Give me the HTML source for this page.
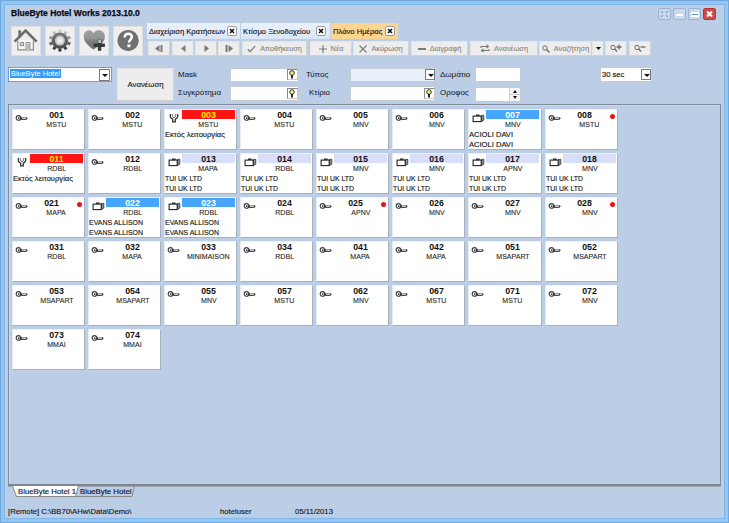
<!DOCTYPE html>
<html><head><meta charset="utf-8"><style>
*{box-sizing:border-box}
html,body{margin:0;padding:0}
body{width:729px;height:523px;overflow:hidden;position:relative;background:#8ec8f8;font-family:"Liberation Sans",sans-serif;color:#222}
.a{position:absolute}
#frame{position:absolute;left:0;top:0;width:729px;height:523px;border:1px solid #74a6d6}
#win{position:absolute;left:4px;top:4px;width:721px;height:515px;background:#bbcee6;border:1px solid #82b6ea}
#title{position:absolute;left:11px;top:8px;font-weight:bold;font-size:8.5px;line-height:10px;color:#0a0a14;white-space:nowrap;-webkit-text-stroke:0.25px #0a0a14}
.wb{position:absolute;top:8px;width:13px;height:12px;border:1px solid #9bb2d0;border-radius:2px;background:#c9d9ee}
.big{position:absolute;top:26px;width:30px;height:30px;background:#efefef;border:1px solid #e2dede}
.tab{position:absolute;top:23px;height:16px;background:linear-gradient(#eaf1fb,#dbe6f6);font-size:7.6px;line-height:9px;padding:4px 0 0 2px;white-space:nowrap;color:#161620;-webkit-text-stroke:0.15px #161620}
.tab.act{background:#fcd690}
.x{position:absolute;top:3px;width:10px;height:10px;border:1px solid #9a9a9a;background:#fff;border-radius:2px}
.x{font-size:0}
.tb{position:absolute;background:#ededed;border:1px solid #d2d2d2;border-top-color:#e4e4e4;border-left-color:#e4e4e4;font-size:7.35px;line-height:9px;color:#858585;-webkit-text-stroke:0.1px #858585;white-space:nowrap;display:flex;align-items:center;justify-content:center;gap:4px}
.tb svg{display:block}
.inp{position:absolute;background:#fff;border:1px solid #c6ccd4}
.lbl{position:absolute;font-size:8px;line-height:9px;color:#1a1a2a;white-space:nowrap;-webkit-text-stroke:0.05px #1a1a2a}
.dd{position:absolute;width:10px;height:11px;border:1px solid #7a7a7a;background:#fff}
.dd:after{content:"";position:absolute;left:1.5px;top:3.5px;border-left:3px solid transparent;border-right:3px solid transparent;border-top:3.5px solid #111}
.bulb{position:absolute;width:11px;height:11px;border:1px solid #8a8a8a;border-right-color:#c8c8c8;border-bottom-color:#c8c8c8;background:#fff}
#panel{position:absolute;left:8px;top:104px;width:713px;height:382px;border:1px solid #808c9c;border-bottom:2px solid #80868e;background:#bbcee6;box-shadow:0 1px 0 #a4acb6,inset 1px 1px 0 #ccd9ee}
.card{position:absolute;width:73px;height:41px;background:#fff;border-right:1px solid #a8b0bc;border-bottom:1px solid #a8b0bc;border-left:1px solid #e8ecf2;border-top:1px solid #eef1f5}
.ic{position:absolute}
.hd{position:absolute;left:17px;top:0px;height:9px;font-weight:bold;font-size:8.8px;line-height:10px;text-align:center;color:#111}
.hr{background:#ff1414;color:#f8f000}
.hb{background:#46a5fc;color:#fff}
.hl{background:#d9def8}
.ty{position:absolute;left:17px;top:10px;font-size:8px;line-height:9px;text-align:center;color:#1e1e1e;-webkit-text-stroke:0.1px #1e1e1e}
.ty span{display:inline-block;transform:scaleX(0.88)}
.ln{position:absolute;left:0px;font-size:8px;line-height:9px;white-space:nowrap;color:#161616;transform-origin:0 0;-webkit-text-stroke:0.15px #161616}
.dot{position:absolute;left:64px;top:4px;width:5px;height:5px;border-radius:50%;background:#f01010}
.stat{position:absolute;top:507px;font-size:7.7px;line-height:9px;color:#1a1a24;white-space:nowrap;-webkit-text-stroke:0.15px #1a1a24}
</style></head><body>
<div id="frame"></div>
<div id="win"></div>
<div id="title">BlueByte Hotel Works 2013.10.0</div>

<div class="wb" style="left:658px"><svg width="11" height="10" viewBox="0 0 11 10" style="position:absolute;left:0;top:0"><path d="M2 2L4 4M9 2L7 4M2 8L4 6M9 8L7 6" stroke="#8aa6cc" stroke-width="1.2"/></svg></div>
<div class="wb" style="left:673px"><div class="a" style="left:2px;top:5px;width:7px;height:2px;background:#fff"></div></div>
<div class="wb" style="left:688px"><div class="a" style="left:2px;top:3px;width:8px;height:5px;border:2px solid #fff;border-left-width:1.5px;border-right-width:1.5px;background:#6f8fba"></div></div>
<div class="wb" style="left:703px;background:#d24848;border-color:#b23a3a"><svg width="11" height="10" viewBox="0 0 11 10" style="position:absolute;left:0;top:0"><path d="M3 2.5L8 7.5M8 2.5L3 7.5" stroke="#fff" stroke-width="2"/></svg></div>
<div class="big" style="left:11px"><svg width="30" height="30" viewBox="0 0 30 30" style="position:absolute;left:-1px;top:-1px"><path d="M6.8 14.2V23.8H22.4V14.2" fill="#f7f7f7" stroke="#8a8a8a" stroke-width="1.2"/><rect x="7.3" y="4.3" width="2.8" height="7.5" fill="#707070"/><path d="M3.6 15.6L14.6 4.6L25.6 15.6" fill="none" stroke="#6a6a6a" stroke-width="2.6" stroke-linejoin="miter"/><path d="M6 15L14.6 6.8L23.2 15" fill="none" stroke="#bdbdbd" stroke-width="0.8"/><rect x="9.3" y="16.6" width="3.2" height="3" fill="#ddd" stroke="#8a8a8a" stroke-width="1"/><path d="M15 23.8V16.6H19V23.8" fill="#e2e2e2" stroke="#8a8a8a" stroke-width="1"/><rect x="16.6" y="18" width="1.4" height="5.6" fill="#aaa"/></svg></div>
<div class="big" style="left:45px"><svg width="30" height="30" viewBox="0 0 30 30" style="position:absolute;left:-1px;top:-1px"><defs><linearGradient id="gg" x1="0" y1="0" x2="0" y2="1"><stop offset="0" stop-color="#7a7a7a"/><stop offset="1" stop-color="#4a4a4a"/></linearGradient></defs><rect x="13.40" y="3.70" width="3" height="3" fill="#c8c8c8" transform="rotate(0 14.90 5.20)"/><rect x="18.93" y="5.50" width="3" height="3" fill="#b9b9b9" transform="rotate(36 20.43 7.00)"/><rect x="22.34" y="10.20" width="3" height="3" fill="#949494" transform="rotate(72 23.84 11.70)"/><rect x="22.34" y="16.00" width="3" height="3" fill="#656565" transform="rotate(108 23.84 17.50)"/><rect x="18.93" y="20.70" width="3" height="3" fill="#404040" transform="rotate(144 20.43 22.20)"/><rect x="13.40" y="22.50" width="3" height="3" fill="#323232" transform="rotate(180 14.90 24.00)"/><rect x="7.87" y="20.70" width="3" height="3" fill="#404040" transform="rotate(216 9.37 22.20)"/><rect x="4.46" y="16.00" width="3" height="3" fill="#656565" transform="rotate(252 5.96 17.50)"/><rect x="4.46" y="10.20" width="3" height="3" fill="#949494" transform="rotate(288 5.96 11.70)"/><rect x="7.87" y="5.50" width="3" height="3" fill="#b9b9b9" transform="rotate(324 9.37 7.00)"/><circle cx="14.9" cy="14.6" r="8.2" fill="url(#gg)"/><circle cx="14.9" cy="14.6" r="5.0" fill="#c4c4c4"/><circle cx="14.9" cy="14.6" r="3.8" fill="#e6e6e6" stroke="#bbb" stroke-width="0.6"/><circle cx="14.9" cy="14.6" r="0.8" fill="#fff"/></svg></div>
<div class="big" style="left:79px"><svg width="30" height="30" viewBox="0 0 30 30" style="position:absolute;left:-1px;top:-1px"><defs><linearGradient id="hg" x1="0" y1="0" x2="0" y2="1"><stop offset="0" stop-color="#a0a0a0"/><stop offset="0.45" stop-color="#929292"/><stop offset="0.5" stop-color="#828282"/><stop offset="1" stop-color="#6e6e6e"/></linearGradient></defs><path d="M14.3 23.6C8.5 19 4.8 15.6 4.8 10.2C4.8 6.6 7.2 4.3 10.2 4.3C12.3 4.3 13.6 5.5 14.6 7.2C15.6 5.5 17.2 4.3 19.6 4.3C23.2 4.3 25.9 6.8 25.9 10.6C25.9 15.8 21.5 19.5 14.3 23.6Z" fill="url(#hg)"/><path d="M20.6 13.7V24.7M14.6 19.2H25.9" stroke="#3a3a3a" stroke-width="3.4"/><path d="M20.6 13.9V17" stroke="#cfcfcf" stroke-width="2.4"/></svg></div>
<div class="big" style="left:113px"><svg width="30" height="30" viewBox="0 0 30 30" style="position:absolute;left:-1px;top:-1px"><circle cx="15.15" cy="14.6" r="10.6" fill="#707070"/><path d="M11.6 11.6C11.6 9 13.3 7.7 15.2 7.7C17.3 7.7 18.8 9 18.8 11C18.8 13.4 15.9 13.7 15.9 16.6" fill="none" stroke="#fff" stroke-width="2.5"/><rect x="14.4" y="18.4" width="3" height="2.8" fill="#fff"/></svg></div>
<div class="tab" style="left:147px;width:93px">Διαχείριση Κρατήσεων<div class="x" style="left:80px"><svg width="8" height="8" viewBox="0 0 8 8" style="position:absolute;left:0;top:0"><path d="M2 2L6 6M6 2L2 6" stroke="#111" stroke-width="1.6"/></svg></div></div>
<div class="tab" style="left:241px;width:89px">Κτίσμο Ξενοδοχείου<div class="x" style="left:75px"><svg width="8" height="8" viewBox="0 0 8 8" style="position:absolute;left:0;top:0"><path d="M2 2L6 6M6 2L2 6" stroke="#111" stroke-width="1.6"/></svg></div></div>
<div class="tab act" style="left:331px;width:67px">Πλάνο Ημέρας<div class="x" style="left:54px"><svg width="8" height="8" viewBox="0 0 8 8" style="position:absolute;left:0;top:0"><path d="M2 2L6 6M6 2L2 6" stroke="#111" stroke-width="1.6"/></svg></div></div>
<div class="tb" style="left:148px;top:41px;width:22px;height:15px"><svg width="8" height="7" viewBox="0 0 8 7"><path d="M0 3.5L4.5 0V7Z" fill="#7a7a7a"/><rect x="5.5" y="0" width="2" height="7" fill="#7a7a7a"/></svg></div>
<div class="tb" style="left:172px;top:41px;width:22px;height:15px"><svg width="5" height="7" viewBox="0 0 5 7"><path d="M0 3.5L4.5 0V7Z" fill="#7a7a7a"/></svg></div>
<div class="tb" style="left:195px;top:41px;width:22px;height:15px"><svg width="5" height="7" viewBox="0 0 5 7"><path d="M5 3.5L0.5 0V7Z" fill="#7a7a7a"/></svg></div>
<div class="tb" style="left:218px;top:41px;width:22px;height:15px"><svg width="8" height="7" viewBox="0 0 8 7"><rect x="0.5" y="0" width="2" height="7" fill="#7a7a7a"/><path d="M8 3.5L3.5 0V7Z" fill="#7a7a7a"/></svg></div>
<div class="tb" style="left:242px;top:41px;width:65px;height:15px"><svg width="9" height="8" viewBox="0 0 9 8"><path d="M0.8 4.2L3.2 6.6L8.2 0.8" fill="none" stroke="#7a7a7a" stroke-width="1.3"/></svg><span>Αποθήκευση</span></div>
<div class="tb" style="left:310px;top:41px;width:42px;height:15px"><svg width="8" height="8" viewBox="0 0 8 8"><path d="M4 0V8M0 4H8" stroke="#7a7a7a" stroke-width="1.2"/></svg><span>Νέα</span></div>
<div class="tb" style="left:353px;top:41px;width:56px;height:15px"><svg width="8" height="8" viewBox="0 0 8 8"><path d="M0.5 0.5L7.5 7.5M7.5 0.5L0.5 7.5" stroke="#7a7a7a" stroke-width="1.1"/></svg><span>Ακύρωση</span></div>
<div class="tb" style="left:411px;top:41px;width:57px;height:15px"><svg width="8" height="8" viewBox="0 0 8 8"><path d="M0 4H8" stroke="#555" stroke-width="1.5"/></svg><span>Διαγραφή</span></div>
<div class="tb" style="left:470px;top:41px;width:68px;height:15px"><svg width="10" height="9" viewBox="0 0 10 9"><path d="M1 4V2.5H8M6.5 1L8.5 2.5L6.5 4M9 5V6.5H2M3.5 5L1.5 6.5L3.5 8" fill="none" stroke="#7a7a7a" stroke-width="1.1"/></svg><span>Ανανέωση</span></div>
<div class="tb" style="left:539px;top:41px;width:53px;height:15px"><svg width="8" height="8" viewBox="0 0 8 8"><circle cx="3" cy="3" r="2.2" fill="none" stroke="#6a6a6a" stroke-width="1"/><path d="M4.6 4.6L7.5 7.5" stroke="#6a6a6a" stroke-width="1.4"/></svg><span>Αναζήτηση</span></div>
<div class="tb" style="left:592px;top:41px;width:12px;height:15px"><svg width="5" height="3" viewBox="0 0 5 3"><path d="M0 0H5L2.5 3Z" fill="#111"/></svg></div>
<div class="tb" style="left:605px;top:41px;width:22px;height:15px"><svg width="12" height="9" viewBox="0 0 12 9"><circle cx="3" cy="3.5" r="2.2" fill="none" stroke="#6a6a6a" stroke-width="1"/><path d="M4.6 5.1L7 7.5" stroke="#6a6a6a" stroke-width="1.4"/><path d="M9 0.5V5.5M6.5 3H11.5" stroke="#6a6a6a" stroke-width="1.3"/></svg></div>
<div class="tb" style="left:629px;top:41px;width:22px;height:15px"><svg width="12" height="9" viewBox="0 0 12 9"><circle cx="3" cy="3.5" r="2.2" fill="none" stroke="#6a6a6a" stroke-width="1"/><path d="M4.6 5.1L7 7.5" stroke="#6a6a6a" stroke-width="1.4"/><path d="M6.5 3H11.5" stroke="#6a6a6a" stroke-width="1.3"/></svg></div>
<div class="inp" style="left:8px;top:67px;width:104px;height:15px;border-color:#6f9fd6"><span class="a" style="left:1px;top:1px;height:9px;background:#3399ff;color:#fff;font-size:7.4px;line-height:9px;padding:0 1px">BlueByte Hotel</span><div class="dd" style="left:90px;top:1px;width:11px;height:12px"></div></div>
<div class="tb" style="left:117px;top:68px;width:57px;height:33px;color:#1a1a1a;-webkit-text-stroke:0.15px #1a1a1a;font-size:7.8px">Ανανέωση</div>
<div class="lbl" style="left:178px;top:70px">Mask</div>
<div class="lbl" style="left:178px;top:88px">Συγκρότημα</div>
<div class="inp" style="left:230px;top:68px;width:69px;height:14px"><div class="bulb" style="left:56px;top:0px"><svg width="8" height="9" viewBox="0 0 8 9" style="position:absolute;left:0;top:0"><circle cx="4" cy="3" r="2.3" fill="#e2f06a" stroke="#222" stroke-width="0.9"/><circle cx="4" cy="3" r="0.8" fill="#f8fcd0"/><rect x="3.1" y="5" width="1.8" height="3.6" rx="0.6" fill="#111"/></svg></div></div>
<div class="inp" style="left:230px;top:86px;width:69px;height:15px"><div class="bulb" style="left:56px;top:1px"><svg width="8" height="9" viewBox="0 0 8 9" style="position:absolute;left:0;top:0"><circle cx="4" cy="3" r="2.3" fill="#e2f06a" stroke="#222" stroke-width="0.9"/><circle cx="4" cy="3" r="0.8" fill="#f8fcd0"/><rect x="3.1" y="5" width="1.8" height="3.6" rx="0.6" fill="#111"/></svg></div></div>
<div class="lbl" style="left:306px;top:70px">Τύπος</div>
<div class="lbl" style="left:309px;top:88px">Κτίριο</div>
<div class="inp" style="left:350px;top:68px;width:85px;height:14px;background:#e8f0fc"><div class="dd" style="left:74px;top:0px"></div></div>
<div class="inp" style="left:350px;top:86px;width:85px;height:15px"><div class="bulb" style="left:73px;top:1px"><svg width="8" height="9" viewBox="0 0 8 9" style="position:absolute;left:0;top:0"><circle cx="4" cy="3" r="2.3" fill="#e2f06a" stroke="#222" stroke-width="0.9"/><circle cx="4" cy="3" r="0.8" fill="#f8fcd0"/><rect x="3.1" y="5" width="1.8" height="3.6" rx="0.6" fill="#111"/></svg></div></div>
<div class="lbl" style="left:440px;top:70px">Δωμάτιο</div>
<div class="lbl" style="left:440px;top:88px">Οροφος</div>
<div class="inp" style="left:475px;top:67px;width:46px;height:15px"></div>
<div class="inp" style="left:475px;top:87px;width:46px;height:15px"><div class="a" style="left:33px;top:0;width:11px;height:13px;border-left:1px solid #ccc;background:#f4f4f4"><div class="a" style="left:3px;top:2px;border-left:2.5px solid transparent;border-right:2.5px solid transparent;border-bottom:3px solid #111"></div><div class="a" style="left:0;top:6px;width:10px;height:1px;background:#ccc"></div><div class="a" style="left:3px;top:8px;border-left:2.5px solid transparent;border-right:2.5px solid transparent;border-top:3px solid #111"></div></div></div>
<div class="inp" style="left:600px;top:67px;width:52px;height:15px"><span class="a" style="left:1px;top:2px;font-size:7.6px;line-height:9px;color:#111;-webkit-text-stroke:0.15px #111">30 sec</span><div class="dd" style="left:40px;top:1px"></div></div>
<div id="panel"></div>
<div class="card" style="left:12px;top:109px"><svg class="ic" width="14" height="8" viewBox="0 0 14 8" style="left:2px;top:4px"><circle cx="3.5" cy="3.9" r="2.3" fill="#fff" stroke="#404040" stroke-width="1.15"/><circle cx="3.8" cy="4.1" r="0.85" fill="#222"/><path d="M5.7 3H11.4L12.9 4.3L11.4 5.6H5.7Z" fill="#505050"/><path d="M5.7 5.2H11.6" stroke="#1a1a1a" stroke-width="0.9"/><circle cx="8" cy="4.1" r="0.9" fill="#fff"/><circle cx="10" cy="4.1" r="0.9" fill="#fff"/></svg><div class="hd" style="width:53px">001</div><div class="ty" style="width:53px"><span>MSTU</span></div></div>
<div class="card" style="left:88px;top:109px"><svg class="ic" width="14" height="8" viewBox="0 0 14 8" style="left:2px;top:4px"><circle cx="3.5" cy="3.9" r="2.3" fill="#fff" stroke="#404040" stroke-width="1.15"/><circle cx="3.8" cy="4.1" r="0.85" fill="#222"/><path d="M5.7 3H11.4L12.9 4.3L11.4 5.6H5.7Z" fill="#505050"/><path d="M5.7 5.2H11.6" stroke="#1a1a1a" stroke-width="0.9"/><circle cx="8" cy="4.1" r="0.9" fill="#fff"/><circle cx="10" cy="4.1" r="0.9" fill="#fff"/></svg><div class="hd" style="width:53px">002</div><div class="ty" style="width:53px"><span>MSTU</span></div></div>
<div class="card" style="left:164px;top:109px"><svg class="ic" width="11" height="10" viewBox="0 0 11 10" style="left:3.5px;top:3px"><path d="M1.6 0.9C0.7 3 1.4 5.2 3.7 6.1V8.8H6.3V6.1C8.6 5.2 9.3 3 8.4 0.9" fill="none" stroke="#303030" stroke-width="1.3"/><path d="M3.3 1.2C3.1 2.8 3.6 4 5 4.8C6.4 4 6.9 2.8 6.7 1.2" fill="none" stroke="#555" stroke-width="1"/></svg><div class="hd hr" style="width:53px">003</div><div class="ty" style="width:53px"><span>MSTU</span></div><div class="ln" style="top:20px;transform:scaleX(0.95)">Εκτός λειτουργίας</div></div>
<div class="card" style="left:240px;top:109px"><svg class="ic" width="14" height="8" viewBox="0 0 14 8" style="left:2px;top:4px"><circle cx="3.5" cy="3.9" r="2.3" fill="#fff" stroke="#404040" stroke-width="1.15"/><circle cx="3.8" cy="4.1" r="0.85" fill="#222"/><path d="M5.7 3H11.4L12.9 4.3L11.4 5.6H5.7Z" fill="#505050"/><path d="M5.7 5.2H11.6" stroke="#1a1a1a" stroke-width="0.9"/><circle cx="8" cy="4.1" r="0.9" fill="#fff"/><circle cx="10" cy="4.1" r="0.9" fill="#fff"/></svg><div class="hd" style="width:53px">004</div><div class="ty" style="width:53px"><span>MSTU</span></div></div>
<div class="card" style="left:316px;top:109px"><svg class="ic" width="14" height="8" viewBox="0 0 14 8" style="left:2px;top:4px"><circle cx="3.5" cy="3.9" r="2.3" fill="#fff" stroke="#404040" stroke-width="1.15"/><circle cx="3.8" cy="4.1" r="0.85" fill="#222"/><path d="M5.7 3H11.4L12.9 4.3L11.4 5.6H5.7Z" fill="#505050"/><path d="M5.7 5.2H11.6" stroke="#1a1a1a" stroke-width="0.9"/><circle cx="8" cy="4.1" r="0.9" fill="#fff"/><circle cx="10" cy="4.1" r="0.9" fill="#fff"/></svg><div class="hd" style="width:53px">005</div><div class="ty" style="width:53px"><span>MNV</span></div></div>
<div class="card" style="left:392px;top:109px"><svg class="ic" width="14" height="8" viewBox="0 0 14 8" style="left:2px;top:4px"><circle cx="3.5" cy="3.9" r="2.3" fill="#fff" stroke="#404040" stroke-width="1.15"/><circle cx="3.8" cy="4.1" r="0.85" fill="#222"/><path d="M5.7 3H11.4L12.9 4.3L11.4 5.6H5.7Z" fill="#505050"/><path d="M5.7 5.2H11.6" stroke="#1a1a1a" stroke-width="0.9"/><circle cx="8" cy="4.1" r="0.9" fill="#fff"/><circle cx="10" cy="4.1" r="0.9" fill="#fff"/></svg><div class="hd" style="width:53px">006</div><div class="ty" style="width:53px"><span>MNV</span></div></div>
<div class="card" style="left:468px;top:109px;width:74px"><svg class="ic" width="13" height="9" viewBox="0 0 13 9" style="left:3px;top:4px"><path d="M4.6 2.2V1.2H7V2.2" fill="none" stroke="#222" stroke-width="1.2"/><path d="M9.2 1.6L11.8 1.2V6.2L9.2 7.6Z" fill="#8a8a8a" stroke="#333" stroke-width="0.8"/><rect x="1.1" y="2.1" width="8.1" height="5.5" fill="#fff" stroke="#222" stroke-width="1.1"/></svg><div class="hd hb" style="width:53px">007</div><div class="ty" style="width:53px"><span>MNV</span></div><div class="ln" style="top:20px;transform:scaleX(0.946)">ACIOLI DAVI</div><div class="ln" style="top:30px;transform:scaleX(0.946)">ACIOLI DAVI</div></div>
<div class="card" style="left:545px;top:109px"><svg class="ic" width="14" height="8" viewBox="0 0 14 8" style="left:2px;top:4px"><circle cx="3.5" cy="3.9" r="2.3" fill="#fff" stroke="#404040" stroke-width="1.15"/><circle cx="3.8" cy="4.1" r="0.85" fill="#222"/><path d="M5.7 3H11.4L12.9 4.3L11.4 5.6H5.7Z" fill="#505050"/><path d="M5.7 5.2H11.6" stroke="#1a1a1a" stroke-width="0.9"/><circle cx="8" cy="4.1" r="0.9" fill="#fff"/><circle cx="10" cy="4.1" r="0.9" fill="#fff"/></svg><div class="hd" style="width:43px">008</div><div class="ty" style="width:53px"><span>MSTU</span></div><div class="dot"></div></div>
<div class="card" style="left:12px;top:153px"><svg class="ic" width="11" height="10" viewBox="0 0 11 10" style="left:3.5px;top:3px"><path d="M1.6 0.9C0.7 3 1.4 5.2 3.7 6.1V8.8H6.3V6.1C8.6 5.2 9.3 3 8.4 0.9" fill="none" stroke="#303030" stroke-width="1.3"/><path d="M3.3 1.2C3.1 2.8 3.6 4 5 4.8C6.4 4 6.9 2.8 6.7 1.2" fill="none" stroke="#555" stroke-width="1"/></svg><div class="hd hr" style="width:53px">011</div><div class="ty" style="width:53px"><span>RDBL</span></div><div class="ln" style="top:20px;transform:scaleX(0.95)">Εκτός λειτουργίας</div></div>
<div class="card" style="left:88px;top:153px"><svg class="ic" width="14" height="8" viewBox="0 0 14 8" style="left:2px;top:4px"><circle cx="3.5" cy="3.9" r="2.3" fill="#fff" stroke="#404040" stroke-width="1.15"/><circle cx="3.8" cy="4.1" r="0.85" fill="#222"/><path d="M5.7 3H11.4L12.9 4.3L11.4 5.6H5.7Z" fill="#505050"/><path d="M5.7 5.2H11.6" stroke="#1a1a1a" stroke-width="0.9"/><circle cx="8" cy="4.1" r="0.9" fill="#fff"/><circle cx="10" cy="4.1" r="0.9" fill="#fff"/></svg><div class="hd" style="width:53px">012</div><div class="ty" style="width:53px"><span>RDBL</span></div></div>
<div class="card" style="left:164px;top:153px"><svg class="ic" width="13" height="9" viewBox="0 0 13 9" style="left:3px;top:4px"><path d="M4.6 2.2V1.2H7V2.2" fill="none" stroke="#222" stroke-width="1.2"/><path d="M9.2 1.6L11.8 1.2V6.2L9.2 7.6Z" fill="#8a8a8a" stroke="#333" stroke-width="0.8"/><rect x="1.1" y="2.1" width="8.1" height="5.5" fill="#fff" stroke="#222" stroke-width="1.1"/></svg><div class="hd hl" style="width:53px">013</div><div class="ty" style="width:53px"><span>MAPA</span></div><div class="ln" style="top:20px;transform:scaleX(0.86)">TUI UK LTD</div><div class="ln" style="top:30px;transform:scaleX(0.86)">TUI UK LTD</div></div>
<div class="card" style="left:240px;top:153px"><svg class="ic" width="13" height="9" viewBox="0 0 13 9" style="left:3px;top:4px"><path d="M4.6 2.2V1.2H7V2.2" fill="none" stroke="#222" stroke-width="1.2"/><path d="M9.2 1.6L11.8 1.2V6.2L9.2 7.6Z" fill="#8a8a8a" stroke="#333" stroke-width="0.8"/><rect x="1.1" y="2.1" width="8.1" height="5.5" fill="#fff" stroke="#222" stroke-width="1.1"/></svg><div class="hd hl" style="width:53px">014</div><div class="ty" style="width:53px"><span>RDBL</span></div><div class="ln" style="top:20px;transform:scaleX(0.86)">TUI UK LTD</div><div class="ln" style="top:30px;transform:scaleX(0.86)">TUI UK LTD</div></div>
<div class="card" style="left:316px;top:153px"><svg class="ic" width="13" height="9" viewBox="0 0 13 9" style="left:3px;top:4px"><path d="M4.6 2.2V1.2H7V2.2" fill="none" stroke="#222" stroke-width="1.2"/><path d="M9.2 1.6L11.8 1.2V6.2L9.2 7.6Z" fill="#8a8a8a" stroke="#333" stroke-width="0.8"/><rect x="1.1" y="2.1" width="8.1" height="5.5" fill="#fff" stroke="#222" stroke-width="1.1"/></svg><div class="hd hl" style="width:53px">015</div><div class="ty" style="width:53px"><span>MNV</span></div><div class="ln" style="top:20px;transform:scaleX(0.86)">TUI UK LTD</div><div class="ln" style="top:30px;transform:scaleX(0.86)">TUI UK LTD</div></div>
<div class="card" style="left:392px;top:153px"><svg class="ic" width="13" height="9" viewBox="0 0 13 9" style="left:3px;top:4px"><path d="M4.6 2.2V1.2H7V2.2" fill="none" stroke="#222" stroke-width="1.2"/><path d="M9.2 1.6L11.8 1.2V6.2L9.2 7.6Z" fill="#8a8a8a" stroke="#333" stroke-width="0.8"/><rect x="1.1" y="2.1" width="8.1" height="5.5" fill="#fff" stroke="#222" stroke-width="1.1"/></svg><div class="hd hl" style="width:53px">016</div><div class="ty" style="width:53px"><span>MNV</span></div><div class="ln" style="top:20px;transform:scaleX(0.86)">TUI UK LTD</div><div class="ln" style="top:30px;transform:scaleX(0.86)">TUI UK LTD</div></div>
<div class="card" style="left:468px;top:153px;width:74px"><svg class="ic" width="13" height="9" viewBox="0 0 13 9" style="left:3px;top:4px"><path d="M4.6 2.2V1.2H7V2.2" fill="none" stroke="#222" stroke-width="1.2"/><path d="M9.2 1.6L11.8 1.2V6.2L9.2 7.6Z" fill="#8a8a8a" stroke="#333" stroke-width="0.8"/><rect x="1.1" y="2.1" width="8.1" height="5.5" fill="#fff" stroke="#222" stroke-width="1.1"/></svg><div class="hd hl" style="width:53px">017</div><div class="ty" style="width:53px"><span>APNV</span></div><div class="ln" style="top:20px;transform:scaleX(0.86)">TUI UK LTD</div><div class="ln" style="top:30px;transform:scaleX(0.86)">TUI UK LTD</div></div>
<div class="card" style="left:545px;top:153px"><svg class="ic" width="13" height="9" viewBox="0 0 13 9" style="left:3px;top:4px"><path d="M4.6 2.2V1.2H7V2.2" fill="none" stroke="#222" stroke-width="1.2"/><path d="M9.2 1.6L11.8 1.2V6.2L9.2 7.6Z" fill="#8a8a8a" stroke="#333" stroke-width="0.8"/><rect x="1.1" y="2.1" width="8.1" height="5.5" fill="#fff" stroke="#222" stroke-width="1.1"/></svg><div class="hd hl" style="width:53px">018</div><div class="ty" style="width:53px"><span>MNV</span></div><div class="ln" style="top:20px;transform:scaleX(0.86)">TUI UK LTD</div><div class="ln" style="top:30px;transform:scaleX(0.86)">TUI UK LTD</div></div>
<div class="card" style="left:12px;top:197px"><svg class="ic" width="14" height="8" viewBox="0 0 14 8" style="left:2px;top:4px"><circle cx="3.5" cy="3.9" r="2.3" fill="#fff" stroke="#404040" stroke-width="1.15"/><circle cx="3.8" cy="4.1" r="0.85" fill="#222"/><path d="M5.7 3H11.4L12.9 4.3L11.4 5.6H5.7Z" fill="#505050"/><path d="M5.7 5.2H11.6" stroke="#1a1a1a" stroke-width="0.9"/><circle cx="8" cy="4.1" r="0.9" fill="#fff"/><circle cx="10" cy="4.1" r="0.9" fill="#fff"/></svg><div class="hd" style="width:43px">021</div><div class="ty" style="width:53px"><span>MAPA</span></div><div class="dot"></div></div>
<div class="card" style="left:88px;top:197px"><svg class="ic" width="13" height="9" viewBox="0 0 13 9" style="left:3px;top:4px"><path d="M4.6 2.2V1.2H7V2.2" fill="none" stroke="#222" stroke-width="1.2"/><path d="M9.2 1.6L11.8 1.2V6.2L9.2 7.6Z" fill="#8a8a8a" stroke="#333" stroke-width="0.8"/><rect x="1.1" y="2.1" width="8.1" height="5.5" fill="#fff" stroke="#222" stroke-width="1.1"/></svg><div class="hd hb" style="width:53px">022</div><div class="ty" style="width:53px"><span>RDBL</span></div><div class="ln" style="top:20px;transform:scaleX(0.87)">EVANS ALLISON</div><div class="ln" style="top:30px;transform:scaleX(0.87)">EVANS ALLISON</div></div>
<div class="card" style="left:164px;top:197px"><svg class="ic" width="13" height="9" viewBox="0 0 13 9" style="left:3px;top:4px"><path d="M4.6 2.2V1.2H7V2.2" fill="none" stroke="#222" stroke-width="1.2"/><path d="M9.2 1.6L11.8 1.2V6.2L9.2 7.6Z" fill="#8a8a8a" stroke="#333" stroke-width="0.8"/><rect x="1.1" y="2.1" width="8.1" height="5.5" fill="#fff" stroke="#222" stroke-width="1.1"/></svg><div class="hd hb" style="width:53px">023</div><div class="ty" style="width:53px"><span>RDBL</span></div><div class="ln" style="top:20px;transform:scaleX(0.87)">EVANS ALLISON</div><div class="ln" style="top:30px;transform:scaleX(0.87)">EVANS ALLISON</div></div>
<div class="card" style="left:240px;top:197px"><svg class="ic" width="14" height="8" viewBox="0 0 14 8" style="left:2px;top:4px"><circle cx="3.5" cy="3.9" r="2.3" fill="#fff" stroke="#404040" stroke-width="1.15"/><circle cx="3.8" cy="4.1" r="0.85" fill="#222"/><path d="M5.7 3H11.4L12.9 4.3L11.4 5.6H5.7Z" fill="#505050"/><path d="M5.7 5.2H11.6" stroke="#1a1a1a" stroke-width="0.9"/><circle cx="8" cy="4.1" r="0.9" fill="#fff"/><circle cx="10" cy="4.1" r="0.9" fill="#fff"/></svg><div class="hd" style="width:53px">024</div><div class="ty" style="width:53px"><span>RDBL</span></div></div>
<div class="card" style="left:316px;top:197px"><svg class="ic" width="14" height="8" viewBox="0 0 14 8" style="left:2px;top:4px"><circle cx="3.5" cy="3.9" r="2.3" fill="#fff" stroke="#404040" stroke-width="1.15"/><circle cx="3.8" cy="4.1" r="0.85" fill="#222"/><path d="M5.7 3H11.4L12.9 4.3L11.4 5.6H5.7Z" fill="#505050"/><path d="M5.7 5.2H11.6" stroke="#1a1a1a" stroke-width="0.9"/><circle cx="8" cy="4.1" r="0.9" fill="#fff"/><circle cx="10" cy="4.1" r="0.9" fill="#fff"/></svg><div class="hd" style="width:43px">025</div><div class="ty" style="width:53px"><span>APNV</span></div><div class="dot"></div></div>
<div class="card" style="left:392px;top:197px"><svg class="ic" width="14" height="8" viewBox="0 0 14 8" style="left:2px;top:4px"><circle cx="3.5" cy="3.9" r="2.3" fill="#fff" stroke="#404040" stroke-width="1.15"/><circle cx="3.8" cy="4.1" r="0.85" fill="#222"/><path d="M5.7 3H11.4L12.9 4.3L11.4 5.6H5.7Z" fill="#505050"/><path d="M5.7 5.2H11.6" stroke="#1a1a1a" stroke-width="0.9"/><circle cx="8" cy="4.1" r="0.9" fill="#fff"/><circle cx="10" cy="4.1" r="0.9" fill="#fff"/></svg><div class="hd" style="width:53px">026</div><div class="ty" style="width:53px"><span>MNV</span></div></div>
<div class="card" style="left:468px;top:197px;width:74px"><svg class="ic" width="14" height="8" viewBox="0 0 14 8" style="left:2px;top:4px"><circle cx="3.5" cy="3.9" r="2.3" fill="#fff" stroke="#404040" stroke-width="1.15"/><circle cx="3.8" cy="4.1" r="0.85" fill="#222"/><path d="M5.7 3H11.4L12.9 4.3L11.4 5.6H5.7Z" fill="#505050"/><path d="M5.7 5.2H11.6" stroke="#1a1a1a" stroke-width="0.9"/><circle cx="8" cy="4.1" r="0.9" fill="#fff"/><circle cx="10" cy="4.1" r="0.9" fill="#fff"/></svg><div class="hd" style="width:53px">027</div><div class="ty" style="width:53px"><span>MNV</span></div></div>
<div class="card" style="left:545px;top:197px"><svg class="ic" width="14" height="8" viewBox="0 0 14 8" style="left:2px;top:4px"><circle cx="3.5" cy="3.9" r="2.3" fill="#fff" stroke="#404040" stroke-width="1.15"/><circle cx="3.8" cy="4.1" r="0.85" fill="#222"/><path d="M5.7 3H11.4L12.9 4.3L11.4 5.6H5.7Z" fill="#505050"/><path d="M5.7 5.2H11.6" stroke="#1a1a1a" stroke-width="0.9"/><circle cx="8" cy="4.1" r="0.9" fill="#fff"/><circle cx="10" cy="4.1" r="0.9" fill="#fff"/></svg><div class="hd" style="width:43px">028</div><div class="ty" style="width:53px"><span>MNV</span></div><div class="dot"></div></div>
<div class="card" style="left:12px;top:241px"><svg class="ic" width="14" height="8" viewBox="0 0 14 8" style="left:2px;top:4px"><circle cx="3.5" cy="3.9" r="2.3" fill="#fff" stroke="#404040" stroke-width="1.15"/><circle cx="3.8" cy="4.1" r="0.85" fill="#222"/><path d="M5.7 3H11.4L12.9 4.3L11.4 5.6H5.7Z" fill="#505050"/><path d="M5.7 5.2H11.6" stroke="#1a1a1a" stroke-width="0.9"/><circle cx="8" cy="4.1" r="0.9" fill="#fff"/><circle cx="10" cy="4.1" r="0.9" fill="#fff"/></svg><div class="hd" style="width:53px">031</div><div class="ty" style="width:53px"><span>RDBL</span></div></div>
<div class="card" style="left:88px;top:241px"><svg class="ic" width="14" height="8" viewBox="0 0 14 8" style="left:2px;top:4px"><circle cx="3.5" cy="3.9" r="2.3" fill="#fff" stroke="#404040" stroke-width="1.15"/><circle cx="3.8" cy="4.1" r="0.85" fill="#222"/><path d="M5.7 3H11.4L12.9 4.3L11.4 5.6H5.7Z" fill="#505050"/><path d="M5.7 5.2H11.6" stroke="#1a1a1a" stroke-width="0.9"/><circle cx="8" cy="4.1" r="0.9" fill="#fff"/><circle cx="10" cy="4.1" r="0.9" fill="#fff"/></svg><div class="hd" style="width:53px">032</div><div class="ty" style="width:53px"><span>MAPA</span></div></div>
<div class="card" style="left:164px;top:241px"><svg class="ic" width="14" height="8" viewBox="0 0 14 8" style="left:2px;top:4px"><circle cx="3.5" cy="3.9" r="2.3" fill="#fff" stroke="#404040" stroke-width="1.15"/><circle cx="3.8" cy="4.1" r="0.85" fill="#222"/><path d="M5.7 3H11.4L12.9 4.3L11.4 5.6H5.7Z" fill="#505050"/><path d="M5.7 5.2H11.6" stroke="#1a1a1a" stroke-width="0.9"/><circle cx="8" cy="4.1" r="0.9" fill="#fff"/><circle cx="10" cy="4.1" r="0.9" fill="#fff"/></svg><div class="hd" style="width:53px">033</div><div class="ty" style="width:53px"><span>MINIMAISON</span></div></div>
<div class="card" style="left:240px;top:241px"><svg class="ic" width="14" height="8" viewBox="0 0 14 8" style="left:2px;top:4px"><circle cx="3.5" cy="3.9" r="2.3" fill="#fff" stroke="#404040" stroke-width="1.15"/><circle cx="3.8" cy="4.1" r="0.85" fill="#222"/><path d="M5.7 3H11.4L12.9 4.3L11.4 5.6H5.7Z" fill="#505050"/><path d="M5.7 5.2H11.6" stroke="#1a1a1a" stroke-width="0.9"/><circle cx="8" cy="4.1" r="0.9" fill="#fff"/><circle cx="10" cy="4.1" r="0.9" fill="#fff"/></svg><div class="hd" style="width:53px">034</div><div class="ty" style="width:53px"><span>RDBL</span></div></div>
<div class="card" style="left:316px;top:241px"><svg class="ic" width="14" height="8" viewBox="0 0 14 8" style="left:2px;top:4px"><circle cx="3.5" cy="3.9" r="2.3" fill="#fff" stroke="#404040" stroke-width="1.15"/><circle cx="3.8" cy="4.1" r="0.85" fill="#222"/><path d="M5.7 3H11.4L12.9 4.3L11.4 5.6H5.7Z" fill="#505050"/><path d="M5.7 5.2H11.6" stroke="#1a1a1a" stroke-width="0.9"/><circle cx="8" cy="4.1" r="0.9" fill="#fff"/><circle cx="10" cy="4.1" r="0.9" fill="#fff"/></svg><div class="hd" style="width:53px">041</div><div class="ty" style="width:53px"><span>MAPA</span></div></div>
<div class="card" style="left:392px;top:241px"><svg class="ic" width="14" height="8" viewBox="0 0 14 8" style="left:2px;top:4px"><circle cx="3.5" cy="3.9" r="2.3" fill="#fff" stroke="#404040" stroke-width="1.15"/><circle cx="3.8" cy="4.1" r="0.85" fill="#222"/><path d="M5.7 3H11.4L12.9 4.3L11.4 5.6H5.7Z" fill="#505050"/><path d="M5.7 5.2H11.6" stroke="#1a1a1a" stroke-width="0.9"/><circle cx="8" cy="4.1" r="0.9" fill="#fff"/><circle cx="10" cy="4.1" r="0.9" fill="#fff"/></svg><div class="hd" style="width:53px">042</div><div class="ty" style="width:53px"><span>MAPA</span></div></div>
<div class="card" style="left:468px;top:241px;width:74px"><svg class="ic" width="14" height="8" viewBox="0 0 14 8" style="left:2px;top:4px"><circle cx="3.5" cy="3.9" r="2.3" fill="#fff" stroke="#404040" stroke-width="1.15"/><circle cx="3.8" cy="4.1" r="0.85" fill="#222"/><path d="M5.7 3H11.4L12.9 4.3L11.4 5.6H5.7Z" fill="#505050"/><path d="M5.7 5.2H11.6" stroke="#1a1a1a" stroke-width="0.9"/><circle cx="8" cy="4.1" r="0.9" fill="#fff"/><circle cx="10" cy="4.1" r="0.9" fill="#fff"/></svg><div class="hd" style="width:53px">051</div><div class="ty" style="width:53px"><span>MSAPART</span></div></div>
<div class="card" style="left:545px;top:241px"><svg class="ic" width="14" height="8" viewBox="0 0 14 8" style="left:2px;top:4px"><circle cx="3.5" cy="3.9" r="2.3" fill="#fff" stroke="#404040" stroke-width="1.15"/><circle cx="3.8" cy="4.1" r="0.85" fill="#222"/><path d="M5.7 3H11.4L12.9 4.3L11.4 5.6H5.7Z" fill="#505050"/><path d="M5.7 5.2H11.6" stroke="#1a1a1a" stroke-width="0.9"/><circle cx="8" cy="4.1" r="0.9" fill="#fff"/><circle cx="10" cy="4.1" r="0.9" fill="#fff"/></svg><div class="hd" style="width:53px">052</div><div class="ty" style="width:53px"><span>MSAPART</span></div></div>
<div class="card" style="left:12px;top:285px"><svg class="ic" width="14" height="8" viewBox="0 0 14 8" style="left:2px;top:4px"><circle cx="3.5" cy="3.9" r="2.3" fill="#fff" stroke="#404040" stroke-width="1.15"/><circle cx="3.8" cy="4.1" r="0.85" fill="#222"/><path d="M5.7 3H11.4L12.9 4.3L11.4 5.6H5.7Z" fill="#505050"/><path d="M5.7 5.2H11.6" stroke="#1a1a1a" stroke-width="0.9"/><circle cx="8" cy="4.1" r="0.9" fill="#fff"/><circle cx="10" cy="4.1" r="0.9" fill="#fff"/></svg><div class="hd" style="width:53px">053</div><div class="ty" style="width:53px"><span>MSAPART</span></div></div>
<div class="card" style="left:88px;top:285px"><svg class="ic" width="14" height="8" viewBox="0 0 14 8" style="left:2px;top:4px"><circle cx="3.5" cy="3.9" r="2.3" fill="#fff" stroke="#404040" stroke-width="1.15"/><circle cx="3.8" cy="4.1" r="0.85" fill="#222"/><path d="M5.7 3H11.4L12.9 4.3L11.4 5.6H5.7Z" fill="#505050"/><path d="M5.7 5.2H11.6" stroke="#1a1a1a" stroke-width="0.9"/><circle cx="8" cy="4.1" r="0.9" fill="#fff"/><circle cx="10" cy="4.1" r="0.9" fill="#fff"/></svg><div class="hd" style="width:53px">054</div><div class="ty" style="width:53px"><span>MSAPART</span></div></div>
<div class="card" style="left:164px;top:285px"><svg class="ic" width="14" height="8" viewBox="0 0 14 8" style="left:2px;top:4px"><circle cx="3.5" cy="3.9" r="2.3" fill="#fff" stroke="#404040" stroke-width="1.15"/><circle cx="3.8" cy="4.1" r="0.85" fill="#222"/><path d="M5.7 3H11.4L12.9 4.3L11.4 5.6H5.7Z" fill="#505050"/><path d="M5.7 5.2H11.6" stroke="#1a1a1a" stroke-width="0.9"/><circle cx="8" cy="4.1" r="0.9" fill="#fff"/><circle cx="10" cy="4.1" r="0.9" fill="#fff"/></svg><div class="hd" style="width:53px">055</div><div class="ty" style="width:53px"><span>MNV</span></div></div>
<div class="card" style="left:240px;top:285px"><svg class="ic" width="14" height="8" viewBox="0 0 14 8" style="left:2px;top:4px"><circle cx="3.5" cy="3.9" r="2.3" fill="#fff" stroke="#404040" stroke-width="1.15"/><circle cx="3.8" cy="4.1" r="0.85" fill="#222"/><path d="M5.7 3H11.4L12.9 4.3L11.4 5.6H5.7Z" fill="#505050"/><path d="M5.7 5.2H11.6" stroke="#1a1a1a" stroke-width="0.9"/><circle cx="8" cy="4.1" r="0.9" fill="#fff"/><circle cx="10" cy="4.1" r="0.9" fill="#fff"/></svg><div class="hd" style="width:53px">057</div><div class="ty" style="width:53px"><span>MSTU</span></div></div>
<div class="card" style="left:316px;top:285px"><svg class="ic" width="14" height="8" viewBox="0 0 14 8" style="left:2px;top:4px"><circle cx="3.5" cy="3.9" r="2.3" fill="#fff" stroke="#404040" stroke-width="1.15"/><circle cx="3.8" cy="4.1" r="0.85" fill="#222"/><path d="M5.7 3H11.4L12.9 4.3L11.4 5.6H5.7Z" fill="#505050"/><path d="M5.7 5.2H11.6" stroke="#1a1a1a" stroke-width="0.9"/><circle cx="8" cy="4.1" r="0.9" fill="#fff"/><circle cx="10" cy="4.1" r="0.9" fill="#fff"/></svg><div class="hd" style="width:53px">062</div><div class="ty" style="width:53px"><span>MNV</span></div></div>
<div class="card" style="left:392px;top:285px"><svg class="ic" width="14" height="8" viewBox="0 0 14 8" style="left:2px;top:4px"><circle cx="3.5" cy="3.9" r="2.3" fill="#fff" stroke="#404040" stroke-width="1.15"/><circle cx="3.8" cy="4.1" r="0.85" fill="#222"/><path d="M5.7 3H11.4L12.9 4.3L11.4 5.6H5.7Z" fill="#505050"/><path d="M5.7 5.2H11.6" stroke="#1a1a1a" stroke-width="0.9"/><circle cx="8" cy="4.1" r="0.9" fill="#fff"/><circle cx="10" cy="4.1" r="0.9" fill="#fff"/></svg><div class="hd" style="width:53px">067</div><div class="ty" style="width:53px"><span>MSTU</span></div></div>
<div class="card" style="left:468px;top:285px;width:74px"><svg class="ic" width="14" height="8" viewBox="0 0 14 8" style="left:2px;top:4px"><circle cx="3.5" cy="3.9" r="2.3" fill="#fff" stroke="#404040" stroke-width="1.15"/><circle cx="3.8" cy="4.1" r="0.85" fill="#222"/><path d="M5.7 3H11.4L12.9 4.3L11.4 5.6H5.7Z" fill="#505050"/><path d="M5.7 5.2H11.6" stroke="#1a1a1a" stroke-width="0.9"/><circle cx="8" cy="4.1" r="0.9" fill="#fff"/><circle cx="10" cy="4.1" r="0.9" fill="#fff"/></svg><div class="hd" style="width:53px">071</div><div class="ty" style="width:53px"><span>MSTU</span></div></div>
<div class="card" style="left:545px;top:285px"><svg class="ic" width="14" height="8" viewBox="0 0 14 8" style="left:2px;top:4px"><circle cx="3.5" cy="3.9" r="2.3" fill="#fff" stroke="#404040" stroke-width="1.15"/><circle cx="3.8" cy="4.1" r="0.85" fill="#222"/><path d="M5.7 3H11.4L12.9 4.3L11.4 5.6H5.7Z" fill="#505050"/><path d="M5.7 5.2H11.6" stroke="#1a1a1a" stroke-width="0.9"/><circle cx="8" cy="4.1" r="0.9" fill="#fff"/><circle cx="10" cy="4.1" r="0.9" fill="#fff"/></svg><div class="hd" style="width:53px">072</div><div class="ty" style="width:53px"><span>MNV</span></div></div>
<div class="card" style="left:12px;top:329px"><svg class="ic" width="14" height="8" viewBox="0 0 14 8" style="left:2px;top:4px"><circle cx="3.5" cy="3.9" r="2.3" fill="#fff" stroke="#404040" stroke-width="1.15"/><circle cx="3.8" cy="4.1" r="0.85" fill="#222"/><path d="M5.7 3H11.4L12.9 4.3L11.4 5.6H5.7Z" fill="#505050"/><path d="M5.7 5.2H11.6" stroke="#1a1a1a" stroke-width="0.9"/><circle cx="8" cy="4.1" r="0.9" fill="#fff"/><circle cx="10" cy="4.1" r="0.9" fill="#fff"/></svg><div class="hd" style="width:53px">073</div><div class="ty" style="width:53px"><span>MMAI</span></div></div>
<div class="card" style="left:88px;top:329px"><svg class="ic" width="14" height="8" viewBox="0 0 14 8" style="left:2px;top:4px"><circle cx="3.5" cy="3.9" r="2.3" fill="#fff" stroke="#404040" stroke-width="1.15"/><circle cx="3.8" cy="4.1" r="0.85" fill="#222"/><path d="M5.7 3H11.4L12.9 4.3L11.4 5.6H5.7Z" fill="#505050"/><path d="M5.7 5.2H11.6" stroke="#1a1a1a" stroke-width="0.9"/><circle cx="8" cy="4.1" r="0.9" fill="#fff"/><circle cx="10" cy="4.1" r="0.9" fill="#fff"/></svg><div class="hd" style="width:53px">074</div><div class="ty" style="width:53px"><span>MMAI</span></div></div>
<svg class="a" style="left:10px;top:486px" width="130" height="13" viewBox="0 0 130 13"><path d="M2.5 0L6.5 10.5H65.5L68.5 0Z" fill="#fff"/><path d="M2.5 0L6.5 10.5H65.5L68.5 0" fill="none" stroke="#8a8a8a"/><path d="M65.5 10.5H122L124.5 0" fill="none" stroke="#8a8a8a"/></svg>
<div class="a" style="left:18px;top:487px;font-size:7.8px;line-height:9px;white-space:nowrap;color:#14142a;-webkit-text-stroke:0.15px #14142a">BlueByte Hotel 1</div>
<div class="a" style="left:80px;top:487px;font-size:7.8px;line-height:9px;white-space:nowrap;color:#14142a;-webkit-text-stroke:0.15px #14142a">BlueByte Hotel</div>
<div class="stat" style="left:8px">[Remote] C:\BB70\AHw\Data\Demo\</div>
<div class="stat" style="left:220px">hoteluser</div>
<div class="stat" style="left:295px">05/11/2013</div>
</body></html>
